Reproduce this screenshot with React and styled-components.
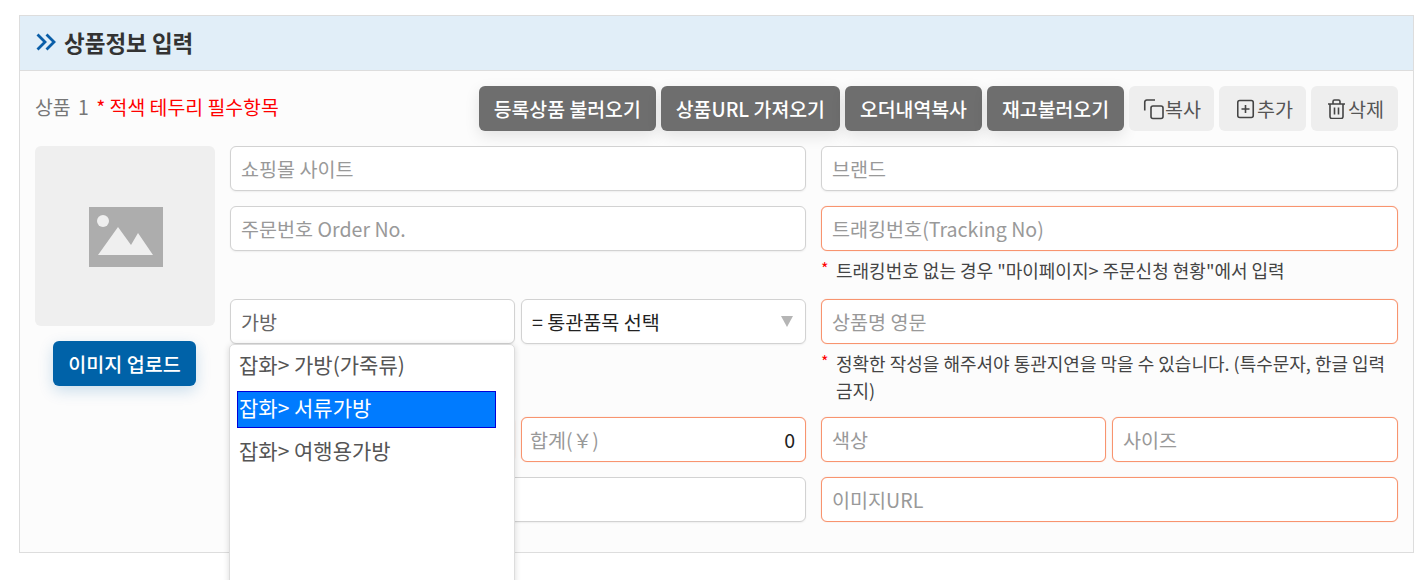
import React from 'react';
import styled, { createGlobalStyle } from 'styled-components';

const GlobalStyle = createGlobalStyle`
  html, body {
    margin: 0;
    overflow: hidden;
    background: #fff;
  }
  * {
    box-sizing: border-box;
  }
  body {
    font-family: "Noto Sans CJK KR", "Noto Sans", sans-serif;
    font-size: 19.6px;
    color: #333;
  }
`;

const Page = styled.div`
  height: 580px;
  overflow: hidden;
  padding: 15px 11px 0 19px;
`;
const Panel = styled.section`
  border: 1px solid #ddd;
  background: #fcfcfc;
`;
const Header = styled.h2`
  display: flex;
  align-items: center;
  gap: 8px;
  height: 55px;
  margin: 0;
  padding: 0 16px 2px;
  background: #e1eef8;
  border-bottom: 1px solid #ddd;
  font-size: 22.5px;
  font-weight: 700;
  color: #333;
`;
const Body = styled.div`
  padding: 15px;
`;
const TopRow = styled.div`
  display: flex;
  align-items: flex-start;
  justify-content: space-between;
  margin-bottom: 15px;
`;
const Title = styled.div`
  color: #777;
  font-size: 19.4px;
  line-height: 41px;
  word-spacing: 3px;
  .req {
    color: #f00;
    word-spacing: 0;
  }
`;
const Actions = styled.div`
  display: flex;
  gap: 5px;
`;
const DarkBtn = styled.button`
  height: 45px;
  padding: 0 15px;
  border: 0;
  border-radius: 6px;
  font: inherit;
  font-size: 19.4px;
  font-weight: 500;
  background: #6e6e6e;
  color: #fff;
  box-shadow: 0 5px 15px rgba(0, 0, 0, .1);
`;
const LightBtn = styled.button`
  display: flex;
  align-items: center;
  width: ${p => p.$w}px;
  height: 45px;
  padding: 0 0 0 ${p => p.$pl}px;
  border: 0;
  border-radius: 6px;
  font: inherit;
  background: #eee;
  color: #555;
  svg {
    flex: none;
  }
`;
const Content = styled.div`
  display: grid;
  grid-template-columns: 180px 1fr;
  column-gap: 15px;
`;
const ImageCol = styled.div`
  display: flex;
  flex-direction: column;
  align-items: flex-start;
`;
const ImageBox = styled.div`
  display: flex;
  align-items: center;
  justify-content: center;
  width: 180px;
  height: 180px;
  margin-bottom: 15px;
  padding: 2px 0 0 2px;
  border-radius: 6px;
  background: #efefef;
`;
const UploadBtn = styled.button`
  width: 143px;
  height: 45px;
  margin-left: 18px;
  padding: 0;
  border: 0;
  border-radius: 6px;
  background: #0062a8;
  color: #fff;
  font: inherit;
  font-weight: 500;
  box-shadow: 0 5px 15px rgba(0, 98, 168, .2);
`;
const Row = styled.div`
  display: grid;
  grid-template-columns: 576px 1fr;
  column-gap: 15px;
  margin-bottom: ${p => p.$gap || 15}px;
`;
const Split = styled.div`
  position: relative;
  display: grid;
  grid-template-columns: 285px 1fr;
  column-gap: 6px;
  align-self: start;
`;
const Input = styled.input`
  display: block;
  width: 100%;
  height: 45px;
  padding: 0 10px;
  border: 1px solid ${p => (p.$req ? '#f8946f' : '#d2d2d2')};
  border-radius: 6px;
  background: #fff;
  font: inherit;
  color: ${p => (p.$muted ? '#666' : '#222')};
  text-align: ${p => (p.$right ? 'right' : 'left')};
  outline: 0;
  box-shadow: ${p => (p.$req ? '0 0 1px rgba(248, 148, 111, .7)' : '0 1px 2px rgba(0, 0, 0, .06)')};
  &::placeholder {
    color: #999;
    opacity: 1;
  }
`;
const SumWrap = styled.div`
  position: relative;
`;
const SumLabel = styled.span`
  position: absolute;
  left: 9px;
  top: 0;
  line-height: 45px;
  color: #999;
`;
const SelectBox = styled.div`
  display: flex;
  align-items: center;
  justify-content: space-between;
  height: 45px;
  padding: 0 12px 0 10px;
  border: 1px solid #d2d2d2;
  border-radius: 6px;
  background: #fff;
  color: #222;
  box-shadow: 0 1px 2px rgba(0, 0, 0, .06);
  &::after {
    content: '';
    border-left: 6.5px solid transparent;
    border-right: 6.5px solid transparent;
    border-top: 11px solid #b5b5b5;
    margin-top: -1px;
  }
`;
const Note = styled.p`
  position: relative;
  margin: 6px 0 0;
  padding-left: 15px;
  padding-right: 5px;
  font-size: 18px;
  line-height: 27px;
  color: #444;
  &::before {
    content: '*';
    position: absolute;
    left: 0;
    top: -2px;
    font-size: 16px;
    color: #f00;
  }
`;
const Dropdown = styled.ul`
  position: absolute;
  z-index: 5;
  left: -1px;
  top: 45px;
  width: 286px;
  height: 300px;
  margin: 0;
  padding: 3px 18px 0 7px;
  list-style: none;
  background: #fff;
  border: 1px solid #ddd;
  border-radius: 5px;
  box-shadow: 0 1px 6px rgba(0, 0, 0, .15);
`;
const Option = styled.li`
  height: 37px;
  margin-bottom: 6px;
  padding-left: 1px;
  font-size: 21px;
  line-height: 31px;
  border: 1px solid ${p => (p.$active ? '#0000d8' : 'transparent')};
  background: ${p => (p.$active ? '#007bff' : 'transparent')};
  color: ${p => (p.$active ? '#fff' : '#555')};
`;

const DoubleChevron = () => (
  <svg width="20" height="18" viewBox="0 0 20 18" fill="none" stroke="#0a5ea8" strokeWidth="2.8">
    <path d="M1.500 1.500 9 9l-7.500 7.500M10.500 1.500 18 9l-7.500 7.500" />
  </svg>
);
const CopyIcon = () => (
  <svg width="22" height="22" viewBox="0 0 22 22" fill="none" stroke="#444" strokeWidth="1.6">
    <path d="M1.750 12.500V4a2 2 0 0 1 2-2H12" />
    <rect x="8" y="8" width="12" height="12.500" rx="2" />
  </svg>
);
const AddIcon = () => (
  <svg width="20" height="20" viewBox="0 0 20 20" fill="none" stroke="#444" strokeWidth="1.6">
    <rect x="0.750" y="1.500" width="15.500" height="17" rx="2" />
    <path d="M8.500 6v8M4.500 10h8" />
  </svg>
);
const TrashIcon = () => (
  <svg width="20" height="20" viewBox="0 0 20 20" fill="none" stroke="#444" strokeWidth="1.6">
    <path d="M0 5h17M5 5V2.500A1.500 1.500 0 0 1 6.500 1h4A1.500 1.500 0 0 1 12 2.500V5" />
    <path d="M2 5v12.500a2 2 0 0 0 2 2h9a2 2 0 0 0 2-2V5" />
    <path d="M6.500 8.500v7M10.500 8.500v7" />
  </svg>
);
const PictureIcon = () => (
  <svg width="74" height="60" viewBox="0 0 74 60">
    <rect width="74" height="60" fill="#adadad" />
    <circle cx="14" cy="14" r="6" fill="#efefef" />
    <path fill="#efefef" d="M9 48 29 20l13 18 7-12 15 22z" />
  </svg>
);

const App = () => (
  <Page>
    <GlobalStyle />
    <Panel>
      <Header>
        <DoubleChevron />
        상품정보 입력
      </Header>
      <Body>
        <TopRow>
          <Title>
            상품 1 <span className="req">* 적색 테두리 필수항목</span>
          </Title>
          <Actions>
            <DarkBtn>등록상품 불러오기</DarkBtn>
            <DarkBtn>상품URL 가져오기</DarkBtn>
            <DarkBtn>오더내역복사</DarkBtn>
            <DarkBtn>재고불러오기</DarkBtn>
            <LightBtn $w={85} $pl={14}><CopyIcon />복사</LightBtn>
            <LightBtn $w={87} $pl={18}><AddIcon />추가</LightBtn>
            <LightBtn $w={87} $pl={17}><TrashIcon />삭제</LightBtn>
          </Actions>
        </TopRow>
        <Content>
          <ImageCol>
            <ImageBox>
              <PictureIcon />
            </ImageBox>
            <UploadBtn>이미지 업로드</UploadBtn>
          </ImageCol>
          <div>
            <Row>
              <Input placeholder="쇼핑몰 사이트" />
              <Input placeholder="브랜드" />
            </Row>
            <Row>
              <Input placeholder="주문번호 Order No." />
              <div>
                <Input $req placeholder="트래킹번호(Tracking No)" />
                <Note>트래킹번호 없는 경우 "마이페이지&gt; 주문신청 현황"에서 입력</Note>
              </div>
            </Row>
            <Row $gap={13}>
              <Split>
                <Input $muted defaultValue="가방" />
                <SelectBox>= 통관품목 선택</SelectBox>
                <Dropdown>
                  <Option>잡화&gt; 가방(가죽류)</Option>
                  <Option $active>잡화&gt; 서류가방</Option>
                  <Option>잡화&gt; 여행용가방</Option>
                </Dropdown>
              </Split>
              <div>
                <Input $req placeholder="상품명 영문" />
                <Note>정확한 작성을 해주셔야 통관지연을 막을 수 있습니다. (특수문자, 한글 입력 금지)</Note>
              </div>
            </Row>
            <Row>
              <Split>
                <Input $req placeholder="수량" />
                <SumWrap>
                  <SumLabel>합계(￥)</SumLabel>
                  <Input $req $right defaultValue="0" />
                </SumWrap>
              </Split>
              <Split>
                <Input $req placeholder="색상" />
                <Input $req placeholder="사이즈" />
              </Split>
            </Row>
            <Row>
              <Input placeholder="상품URL" />
              <Input $req placeholder="이미지URL" />
            </Row>
          </div>
        </Content>
      </Body>
    </Panel>
  </Page>
);

export default App;
